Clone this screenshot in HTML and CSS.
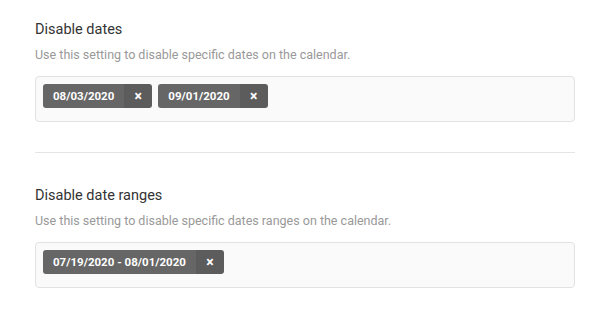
FILE: index.html
```html
<!DOCTYPE html>
<html>
<head>
<meta charset="utf-8">
<link rel="stylesheet" href="styles.css">
</head>
<body>
<div class="page">
  <section class="setting">
    <h3 class="title">Disable dates</h3>
    <p class="desc">Use this setting to disable specific dates on the calendar.</p>
    <div class="field">
      <span class="chip"><span class="chip-label">08/03/2020</span><span class="chip-x">×</span></span>
      <span class="chip"><span class="chip-label">09/01/2020</span><span class="chip-x">×</span></span>
    </div>
  </section>
  <hr class="sep">
  <section class="setting">
    <h3 class="title">Disable date ranges</h3>
    <p class="desc">Use this setting to disable specific dates ranges on the calendar.</p>
    <div class="field">
      <span class="chip"><span class="chip-label">07/19/2020 - 08/01/2020</span><span class="chip-x">×</span></span>
    </div>
  </section>
</div>
</body>
</html>
```
FILE: styles.css
```css
* { box-sizing: border-box; }
html, body { margin: 0; padding: 0; background: #fff; }
body { font-family: Roboto, "Noto Sans", Arial, sans-serif; }
.page { padding: 21px 35px 0 35px; width: 610px; }
.setting { display: flex; flex-direction: column; }
.title { margin: 0; font-size: 14.5px; font-weight: 400; color: #333; line-height: 18px; }
.desc { margin: 9px 0 0 0; font-size: 12.5px; color: #999; line-height: 14px; }
.field {
  margin-top: 14px;
  height: 46px;
  background: #fafafa;
  border: 1px solid #e2e2e2;
  border-radius: 4px;
  padding: 7px 7px;
  display: flex;
  gap: 6px;
  align-items: flex-start;
}
.chip {
  display: flex;
  height: 24px;
  border-radius: 3px;
  overflow: hidden;
  color: #fff;
  font-size: 11.5px;
  font-weight: 700;
  line-height: 24px;
}
.chip-label { background: #666; padding: 0 10px; }
.chip-x { background: #5c5c5c; width: 28px; text-align: center; font-size: 14px; }
.sep { margin: 30px 0 34px 0; border: 0; border-top: 1px solid #e5e5e5; height: 0; }
```
